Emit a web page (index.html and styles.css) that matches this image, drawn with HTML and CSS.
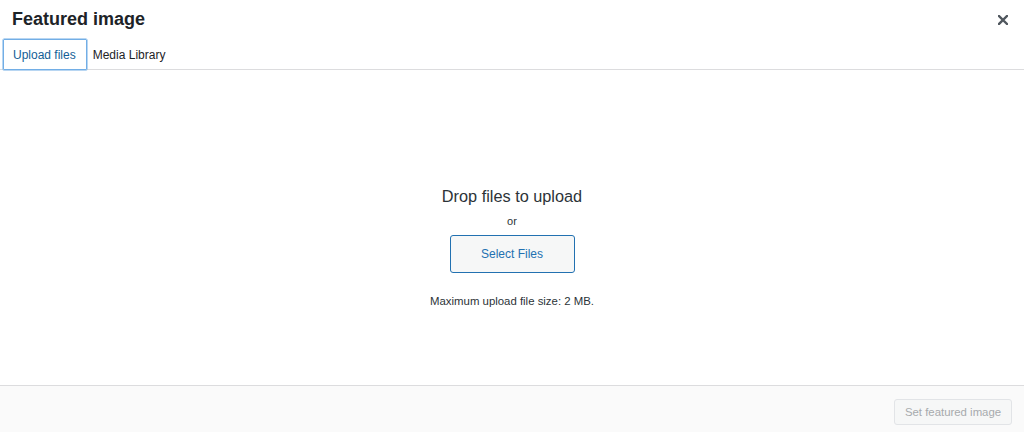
FILE: index.html
```html
<!DOCTYPE html>
<html>
<head>
<meta charset="utf-8">
<link rel="stylesheet" href="styles.css">
</head>
<body>
<div class="modal">
  <header class="modal-header">
    <div class="title-row">
      <h1 class="title">Featured image</h1>
      <button class="close" aria-label="Close">
        <svg width="10" height="10" viewBox="0 0 10 10"><path d="M1 1 L9 9 M9 1 L1 9" stroke="#50575e" stroke-width="2.4" stroke-linecap="square"/></svg>
      </button>
    </div>
    <nav class="tabs">
      <span class="tab active">Upload files</span>
      <span class="tab">Media Library</span>
    </nav>
  </header>
  <main class="uploader">
    <p class="drop-text">Drop files to upload</p>
    <p class="or">or</p>
    <button class="select-btn">Select Files</button>
    <p class="max-size">Maximum upload file size: 2 MB.</p>
  </main>
  <footer class="modal-footer">
    <button class="set-btn" disabled>Set featured image</button>
  </footer>
</div>
</body>
</html>
```
FILE: styles.css
```css
* { box-sizing: border-box; }
html, body {
  margin: 0;
  padding: 0;
  background: #fff;
  font-family: "Liberation Sans", Arial, sans-serif;
  color: #1d2327;
}
.modal {
  width: 1024px;
  height: 432px;
  display: flex;
  flex-direction: column;
}
.modal-header {
  border-bottom: 1px solid #dcdcde;
  height: 70px;
}
.title-row {
  display: flex;
  justify-content: space-between;
  align-items: center;
  padding: 8px 16px 0 12px;
  height: 39px;
  align-items: flex-start;
}
.title {
  margin: 0;
  font-size: 18px;
  line-height: 22px;
  font-weight: 700;
  color: #1d2327;
}
.close {
  border: 0;
  background: none;
  padding: 0;
  margin-top: 7px;
  width: 10px;
  height: 10px;
  display: flex;
}
.tabs {
  display: flex;
  padding-left: 3px;
  height: 31px;
}
.tab {
  display: flex;
  align-items: center;
  font-size: 12px;
  color: #1d2327;
  height: 31px;
  padding: 0 6px;
}
.tab.active {
  border: 1px solid #72aee6;
  border-radius: 1px;
  color: #135e96;
  padding: 0 10px 0 9px;
  box-shadow: 0 0 0 0.5px #72aee6;
}
.uploader {
  flex: 1;
  display: flex;
  flex-direction: column;
  align-items: center;
  padding-top: 116px;
}
.drop-text {
  margin: 0;
  font-size: 16.3px;
  line-height: 20px;
  color: #2c3338;
}
.or {
  margin: 7px 0 0;
  font-size: 11px;
  line-height: 16px;
  color: #2c3338;
}
.select-btn {
  margin-top: 6px;
  width: 125px;
  height: 38px;
  border: 1px solid #2271b1;
  border-radius: 3px;
  background: #f6f7f7;
  color: #2271b1;
  font-family: "Liberation Sans", Arial, sans-serif;
  font-size: 12px;
  padding: 0;
}
.max-size {
  margin: 20px 0 0;
  font-size: 11.4px;
  line-height: 16px;
  color: #2c3338;
}
.modal-footer {
  height: 47px;
  border-top: 1px solid #dcdcde;
  background: #fafafa;
  display: flex;
  justify-content: flex-end;
  align-items: flex-start;
  padding: 13px 12px 0 0;
}
.set-btn {
  width: 118px;
  height: 26px;
  border: 1px solid #e2e4e7;
  border-radius: 3px;
  background: #f6f7f7;
  color: #a7aaad;
  font-family: "Liberation Sans", Arial, sans-serif;
  font-size: 11.4px;
  padding: 0;
}
```
